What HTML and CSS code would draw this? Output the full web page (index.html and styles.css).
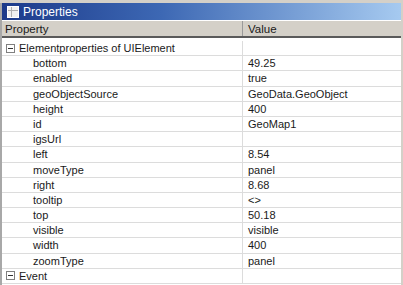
FILE: index.html
```html
<!DOCTYPE html>
<html lang="en">

<head>
 <meta charset="UTF-8">
 <title>Properties</title>
 <link rel="stylesheet" href="styles.css">
</head>

<body>
 <div class="window">
  <div class="title">
   <span class="icon"></span>
   <span>Properties</span>
  </div>
  <div class="head">
   <div class="col-name">Property</div>
   <div class="col-value">Value</div>
  </div>
  <div class="rows">
   <div class="row group"><div class="col-name"><span class="box"></span>Elementproperties of UIElement</div><div class="col-value"></div></div>
   <div class="row"><div class="col-name">bottom</div><div class="col-value">49.25</div></div>
   <div class="row"><div class="col-name">enabled</div><div class="col-value">true</div></div>
   <div class="row"><div class="col-name">geoObjectSource</div><div class="col-value">GeoData.GeoObject</div></div>
   <div class="row"><div class="col-name">height</div><div class="col-value">400</div></div>
   <div class="row"><div class="col-name">id</div><div class="col-value">GeoMap1</div></div>
   <div class="row"><div class="col-name">igsUrl</div><div class="col-value"></div></div>
   <div class="row"><div class="col-name">left</div><div class="col-value">8.54</div></div>
   <div class="row"><div class="col-name">moveType</div><div class="col-value">panel</div></div>
   <div class="row"><div class="col-name">right</div><div class="col-value">8.68</div></div>
   <div class="row"><div class="col-name">tooltip</div><div class="col-value">&lt;&gt;</div></div>
   <div class="row"><div class="col-name">top</div><div class="col-value">50.18</div></div>
   <div class="row"><div class="col-name">visible</div><div class="col-value">visible</div></div>
   <div class="row"><div class="col-name">width</div><div class="col-value">400</div></div>
   <div class="row"><div class="col-name">zoomType</div><div class="col-value">panel</div></div>
   <div class="row group"><div class="col-name"><span class="box"></span>Event</div><div class="col-value"></div></div>
  </div>
 </div>
</body>

</html>
```

FILE: styles.css
```css
* {
 box-sizing: border-box;
}

body {
 margin: 0;
 background-color: #d4d0c8;
 font-family: "Liberation Sans", Arial, sans-serif;
 font-size: 11px;
 color: #1a1a1a;
}

.window {
 margin-top: 3px;
 margin-right: 2px;
 border-left: 2px solid #a8a8a8;
 height: 282px;
 overflow: hidden;
 background-color: #fff;
}

.title {
 height: 17px;
 display: flex;
 align-items: center;
 gap: 4px;
 padding-left: 5px;
 color: #fff;
 font-size: 12px;
 background: linear-gradient(to right, #1c3a8a 0%, #3d68b4 40%, #a6caf0 100%);
}

.icon {
 width: 12px;
 height: 12px;
 border: 1px solid #fff;
 background:
  linear-gradient(#b0b0b0, #b0b0b0) 0 3px / 100% 1px no-repeat,
  linear-gradient(#b0b0b0, #b0b0b0) 3px 0 / 1px 100% no-repeat,
  #f0f0f0;
}

.head {
 display: flex;
 height: 17px;
 margin-top: 1px;
 background-color: #d4d0c8;
 border-bottom: 2px solid #5a5a5a;
 line-height: 16px;
 font-size: 11.5px;
}

.head .col-name {
 border-right: 1px solid #9a9a9a;
 padding-left: 3px;
}

.col-name {
 width: 241px;
 flex: none;
}

.col-value {
 flex: 1;
 padding-left: 5px;
}

.rows {
 padding-top: 3px;
}

.row {
 display: flex;
 height: 15.2px;
 line-height: 14.2px;
 border-bottom: 1px solid #dcdcdc;
}

.row .col-name {
 padding-left: 31px;
 border-right: 1px solid #dcdcdc;
}

.row.group .col-name {
 padding-left: 4px;
 display: flex;
 align-items: center;
 gap: 4px;
}

.box {
 width: 9px;
 height: 9px;
 border: 1px solid #808080;
 background: linear-gradient(#333, #333) center / 5px 1px no-repeat;
}
```
